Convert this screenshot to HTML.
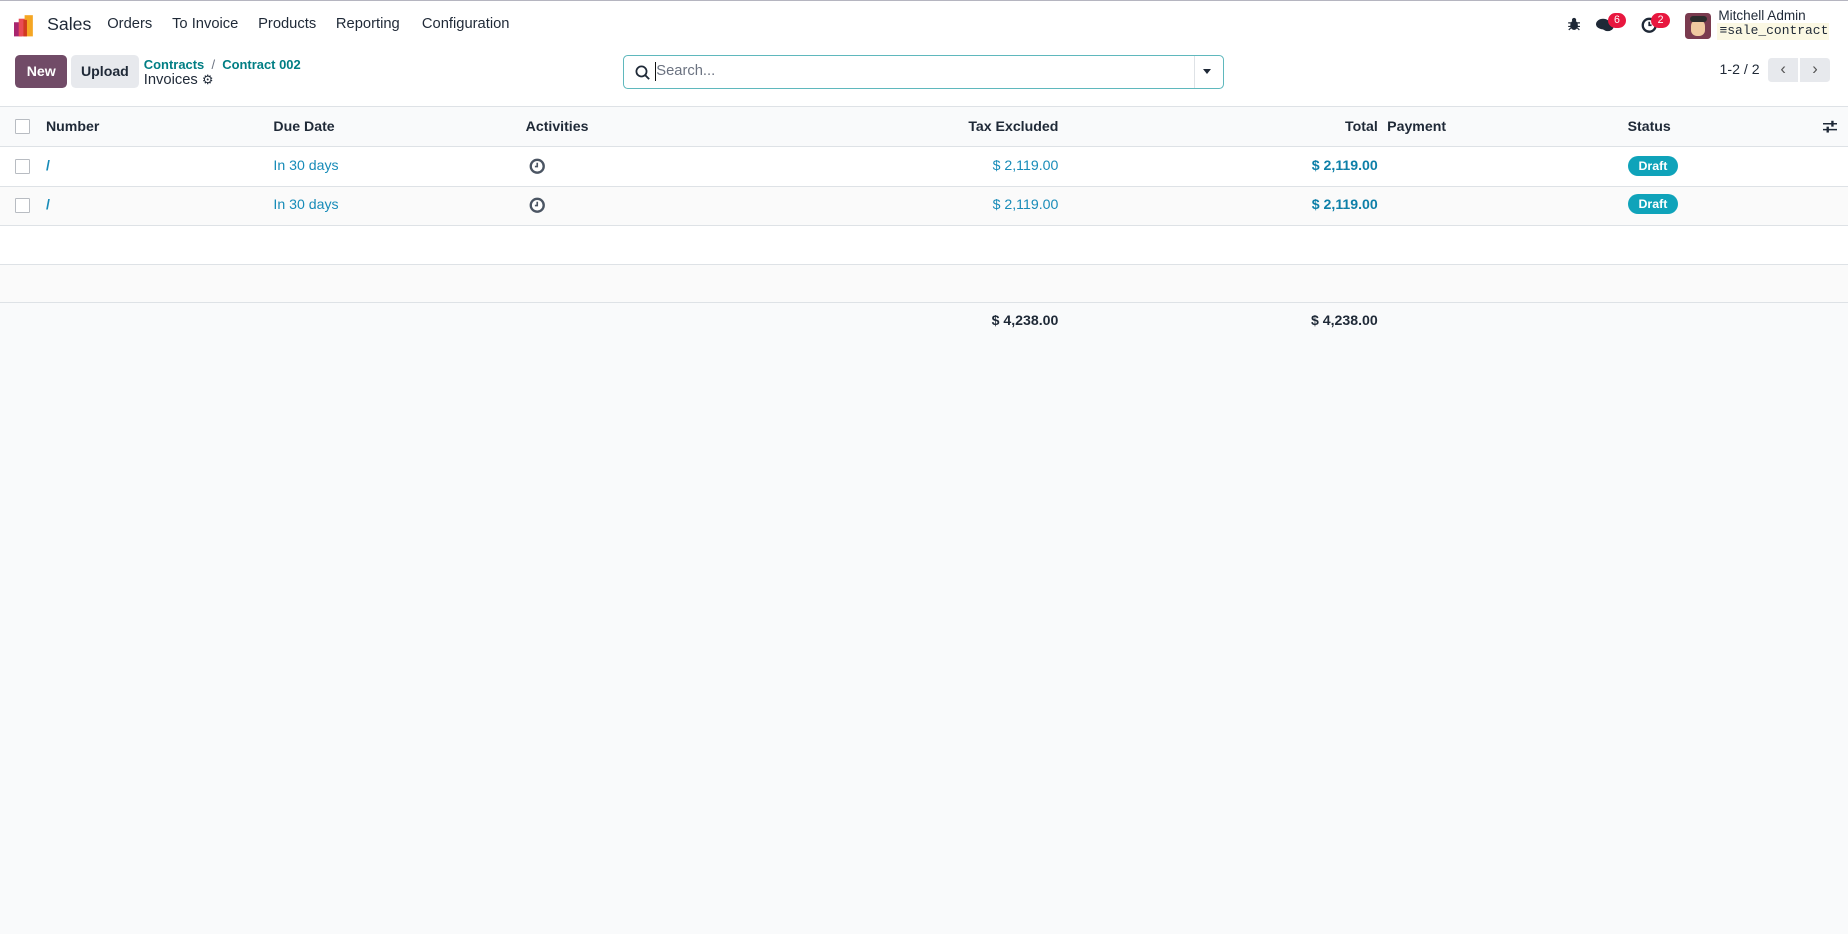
<!DOCTYPE html>
<html><head><meta charset="utf-8"><style>
html,body{margin:0;padding:0;width:1848px;height:934px;overflow:hidden;background:#f9fafb;}
#w{zoom:1.178571;width:1568px;height:792px;position:relative;font-family:"Liberation Sans",sans-serif;color:#1f2937;font-size:12.5px;background:#f9fafb;}
.a{position:absolute;white-space:nowrap;}
.top{position:absolute;left:0;top:0;width:1568px;height:40px;background:#fff;border-top:1px solid #b5b5c0;box-sizing:border-box;}
.cp{position:absolute;left:0;top:40px;width:1568px;height:50px;background:#fff;}
.btn{position:absolute;border-radius:4px;font-weight:bold;font-size:12px;text-align:center;line-height:28px;}
.row{position:absolute;left:0;width:1568px;border-bottom:1px solid #dee2e6;box-sizing:border-box;}
.cb{position:absolute;left:13px;width:11px;height:11px;border:1px solid #b8bcc2;background:#fff;border-radius:1px;}
.lk{color:#178bb8;}
.bd{font-weight:bold;}
.draft{position:absolute;left:1381px;width:43px;height:17px;border-radius:9px;background:#0fa3ba;color:#fff;font-weight:bold;font-size:10.5px;text-align:center;line-height:17px;}
.hd{font-size:12px}
</style></head><body><div id="w">
<div class="top">
  <svg class="a" style="left:12px;top:11px" width="20" height="20" viewBox="0 0 20 20"><rect x="0" y="7" width="7" height="12" fill="#a8266f"/><rect x="4" y="4" width="7" height="15" fill="#e94b55"/><rect x="9" y="1" width="7" height="18" fill="#f5a623"/><rect x="8" y="5" width="3" height="14" fill="#d13a1f"/></svg>
  <div class="a" style="left:40px;top:11px;font-size:15px;color:#1f2937">Sales</div>
  <div class="a" style="left:91px;top:13px">Orders</div>
  <div class="a" style="left:146px;top:13px">To Invoice</div>
  <div class="a" style="left:219px;top:13px">Products</div>
  <div class="a" style="left:285px;top:13px">Reporting</div>
  <div class="a" style="left:358px;top:13px">Configuration</div>
  <svg class="a" style="left:1330px;top:14px" width="12" height="12" viewBox="0 0 12 12"><ellipse cx="6" cy="7" rx="3.2" ry="4" fill="#1f2937"/><circle cx="6" cy="2.5" r="1.8" fill="#1f2937"/><path d="M1 5h10M1 8h10M1.5 11l2-2M10.5 11l-2-2" stroke="#1f2937" stroke-width="1"/></svg>
  <svg class="a" style="left:1354px;top:14px" width="16" height="14" viewBox="0 0 16 14"><ellipse cx="6" cy="6" rx="6" ry="4.5" fill="#1f2937"/><ellipse cx="10" cy="8" rx="5" ry="4" fill="#1f2937"/></svg>
  <div class="a" style="left:1364px;top:10px;width:16px;height:13px;border-radius:7px;background:#e8173f;color:#fff;font-size:9px;text-align:center;line-height:13px">6</div>
  <svg class="a" style="left:1392px;top:14px" width="14" height="14" viewBox="0 0 14 14"><circle cx="7" cy="7" r="5.5" fill="none" stroke="#1f2937" stroke-width="2"/><path d="M7 4v3h2" stroke="#1f2937" stroke-width="1.5" fill="none"/></svg>
  <div class="a" style="left:1401px;top:10px;width:16px;height:13px;border-radius:7px;background:#e8173f;color:#fff;font-size:9px;text-align:center;line-height:13px">2</div>
  <div class="a" style="left:1430px;top:10px;width:22px;height:22px;border-radius:3px;background:#7a3b4f"><div style="position:absolute;left:5px;top:6px;width:12px;height:14px;border-radius:5px;background:#f0c9a0"></div><div style="position:absolute;left:4px;top:3px;width:14px;height:5px;background:#2d2d2d;border-radius:3px"></div></div>
  <div class="a" style="left:1458px;top:6px;font-size:11.5px">Mitchell Admin</div>
  <div class="a" style="left:1457px;top:19px;height:14px;width:93px;background:#fbf8e3;font-family:'Liberation Mono',monospace;font-size:11px;line-height:14px;padding-left:2px">&#8801;sale_contract</div>
</div>
<div class="cp">
  <div class="btn" style="left:13px;top:7px;width:44px;background:#714b67;color:#fff">New</div>
  <div class="btn" style="left:60px;top:7px;width:58px;background:#e7e9ed;color:#1f2937">Upload</div>
  <div class="a" style="left:122px;top:8px;font-size:11px;font-weight:bold;color:#017e84">Contracts <span style="color:#6b7280;font-weight:normal">&nbsp;/&nbsp;</span> Contract 002</div>
  <div class="a" style="left:122px;top:21px;font-size:12.5px">Invoices <span style="font-size:11px">⚙</span></div>
  <div class="a" style="left:529px;top:7px;width:508px;height:27px;border:1px solid #5fb8bd;border-radius:4px;background:#fff">
    <svg class="a" style="left:9px;top:7px" width="13" height="13" viewBox="0 0 13 13"><circle cx="5.5" cy="5.5" r="4.3" fill="none" stroke="#1f2937" stroke-width="1.5"/><path d="M8.5 8.5l3.5 3.5" stroke="#1f2937" stroke-width="1.6"/></svg>
    <div class="a" style="left:27px;top:6px;color:#6b7280">Search...</div>
    <div class="a" style="left:26px;top:5px;width:1px;height:16px;background:#111"></div>
    <div class="a" style="left:483px;top:0;width:1px;height:27px;background:#dee2e6"></div>
    <div class="a" style="left:491px;top:11px;width:0;height:0;border-left:4px solid transparent;border-right:4px solid transparent;border-top:5px solid #1f2937"></div>
  </div>
  <div class="a" style="left:1459px;top:12px;font-size:12px">1-2 / 2</div>
  <div class="a" style="left:1500px;top:9px;width:26px;height:21px;background:#e7e9ed;border-radius:3px 0 0 3px;text-align:center;line-height:20px;color:#555;font-size:14px">&#8249;</div>
  <div class="a" style="left:1527px;top:9px;width:26px;height:21px;background:#e7e9ed;border-radius:0 3px 3px 0;text-align:center;line-height:20px;color:#555;font-size:14px">&#8250;</div>
</div>
<div class="row hd" style="top:90px;height:35px;background:#f9fafb;border-top:1px solid #dee2e6;font-weight:bold">
  <div class="cb" style="top:10px"></div>
  <div class="a" style="left:39px;top:9px">Number</div>
  <div class="a" style="left:232px;top:9px">Due Date</div>
  <div class="a" style="left:446px;top:9px">Activities</div>
  <div class="a" style="right:670px;top:9px">Tax Excluded</div>
  <div class="a" style="right:399px;top:9px">Total</div>
  <div class="a" style="left:1177px;top:9px">Payment</div>
  <div class="a" style="left:1381px;top:9px">Status</div>
  <svg class="a" style="left:1547px;top:10px" width="12" height="12" viewBox="0 0 12 12"><path d="M0 4h12M0 9h12" stroke="#1f2937" stroke-width="1.3"/><rect x="7" y="1.5" width="2" height="5" fill="#1f2937"/><rect x="3" y="6.5" width="2" height="5" fill="#1f2937"/></svg>
</div>
<div class="row hd" style="top:125px;height:34px;background:#fff">
  <div class="cb" style="top:10px"></div>
  <div class="a lk" style="left:39px;top:8px;font-weight:bold">/</div>
  <div class="a lk" style="left:232px;top:8px">In 30 days</div>
  <svg class="a" style="left:449px;top:9px" width="14" height="14" viewBox="0 0 14 14"><circle cx="7" cy="7" r="5.5" fill="#fff" stroke="#4b5563" stroke-width="2"/><path d="M7 4v3.3H5" stroke="#4b5563" stroke-width="1.4" fill="none"/></svg>
  <div class="a lk" style="right:670px;top:8px">$ 2,119.00</div>
  <div class="a lk bd" style="right:399px;top:8px;color:#0d7fa8">$ 2,119.00</div>
  <div class="draft" style="top:7px">Draft</div>
</div>
<div class="row hd" style="top:159px;height:33px;background:#fafafa">
  <div class="cb" style="top:9px"></div>
  <div class="a lk" style="left:39px;top:7px;font-weight:bold">/</div>
  <div class="a lk" style="left:232px;top:7px">In 30 days</div>
  <svg class="a" style="left:449px;top:8px" width="14" height="14" viewBox="0 0 14 14"><circle cx="7" cy="7" r="5.5" fill="#fff" stroke="#4b5563" stroke-width="2"/><path d="M7 4v3.3H5" stroke="#4b5563" stroke-width="1.4" fill="none"/></svg>
  <div class="a lk" style="right:670px;top:7px">$ 2,119.00</div>
  <div class="a lk bd" style="right:399px;top:7px;color:#0d7fa8">$ 2,119.00</div>
  <div class="draft" style="top:6px">Draft</div>
</div>
<div class="row" style="top:192px;height:33px;background:#fff"></div>
<div class="row" style="top:225px;height:32px;background:#fafafa"></div>
<div class="a bd hd" style="right:670px;top:265px">$ 4,238.00</div>
<div class="a bd hd" style="right:399px;top:265px">$ 4,238.00</div>
</div></body></html>
